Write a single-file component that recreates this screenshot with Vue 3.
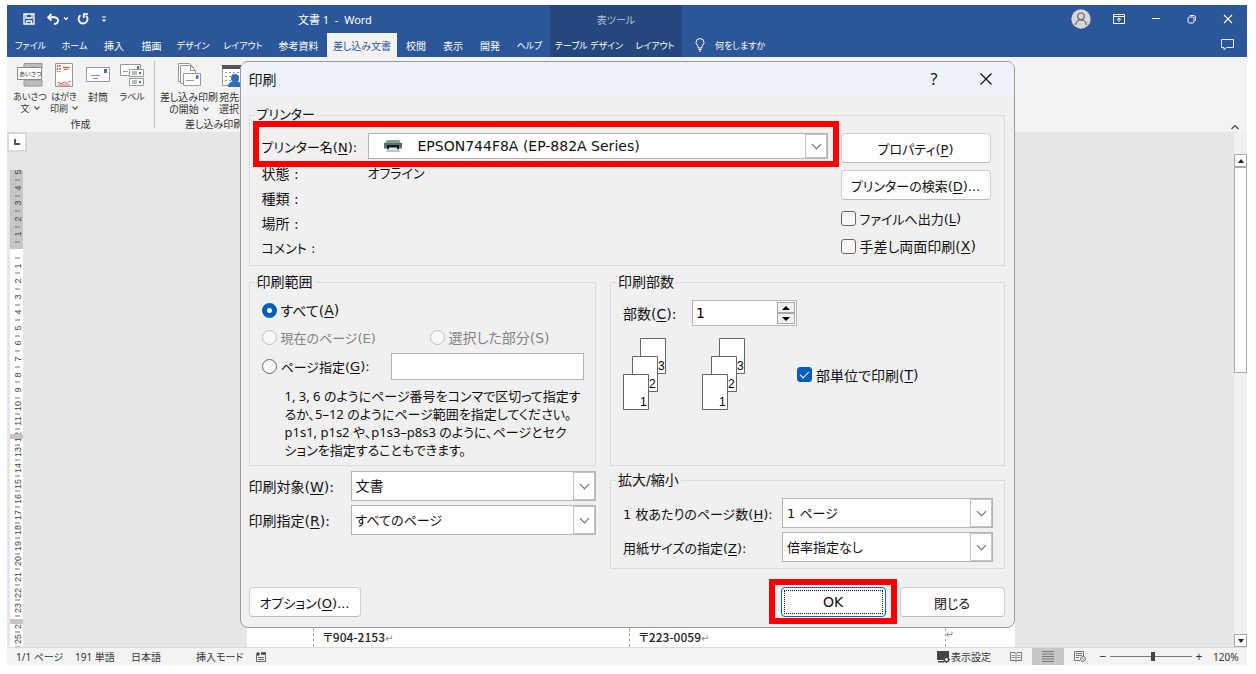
<script setup>
import { ref } from 'vue'

const tabs = ['ファイル', 'ホーム', '挿入', '描画', 'デザイン', 'レイアウト', '参考資料', '差し込み文書', '校閲', '表示', '開発', 'ヘルプ']
const activeTab = ref('差し込み文書')
const isKana = (t) => /^[ァ-ー]+$/.test(t)

const printer = ref('EPSON744F8A (EP-882A Series)')
const toFile = ref(false)
const manualDuplex = ref(false)
const range = ref('all')
const pages = ref('')
const copies = ref('1')
const collate = ref(true)
const target = ref('文書')
const which = ref('すべてのページ')
const perSheet = ref('1 ページ')
const paper = ref('倍率指定なし')
const zoom = ref(52)

const unit = 218 / 14
const origin = 80
const numbers = []
const ticks = []
for (let n = -5; n <= 25; n++) {
  if (n !== 0) numbers.push({ key: n, label: Math.abs(n), y: Math.round(origin + n * unit) })
  ticks.push({ key: n, y: Math.round(origin + (n + 0.5) * unit) })
}
</script>

<template>
  <div class="frame">
    <div class="app">
      <header class="head">
        <div class="head-left">
          <div class="titlebar">
            <div class="qat">
              <button type="button" aria-label="上書き保存">
                <svg width="12" height="12" viewBox="0 0 12 12" fill="none" stroke="#fff" stroke-width="1.3"><path d="M1 1h10v10H1zM3 1v4h6V1M3.5 11V8h5v3" /></svg>
              </button>
              <button type="button" aria-label="元に戻す">
                <svg width="22" height="12" viewBox="0 0 22 12" fill="none" stroke="#fff"><path d="M4.500 1L1.200 4.300L4.500 7.600M1.200 4.300H7C9.500 4.300 11 5.800 11 7.600S9.500 11 7 11" stroke-width="1.900" /><path d="M17 4.500l2 2 2-2" stroke-width="1.200" /></svg>
              </button>
              <button type="button" aria-label="やり直し">
                <svg width="12" height="12" viewBox="0 0 12 12" fill="none" stroke="#fff" stroke-width="1.800"><path d="M3.500 2.300A4.500 4.500 0 1 0 9 2.600M6.800 5V1.200H11" /></svg>
              </button>
              <button type="button" aria-label="カスタマイズ">
                <svg width="6" height="7" viewBox="0 0 6 7"><path d="M1 1h4" stroke="#fff" /><path d="M1 3.500h4L3 6z" fill="#fff" /></svg>
              </button>
            </div>
            <span class="doc-title">文書 1&nbsp; -&nbsp; Word</span>
          </div>
          <nav class="tabs">
            <button v-for="t in tabs" :key="t" type="button" class="tab" :class="{ active: t === activeTab, kana: isKana(t) }" @click="activeTab = t">{{ t }}</button>
          </nav>
        </div>
        <div class="head-context">
          <div class="context-title">表ツール</div>
          <nav class="context-tabs">
            <button type="button" class="tab kana">テーブル デザイン</button>
            <button type="button" class="tab kana">レイアウト</button>
          </nav>
        </div>
        <div class="head-right">
          <div class="window-tools">
            <button type="button" aria-label="アカウント">
              <svg width="20" height="20" viewBox="0 0 20 20"><circle cx="10" cy="10" r="9.700" fill="#d8d6d4" /><g fill="none" stroke="#666" stroke-width="1.200"><circle cx="10" cy="7.300" r="3.300" /><path d="M4.500 16C5 12.500 7 11 10 11s5 1.500 5.500 5" /></g></svg>
            </button>
            <button type="button" aria-label="リボンの表示オプション">
              <svg width="12" height="10" viewBox="0 0 12 10" fill="none" stroke="#fff"><path d="M.5.5h11v9H.5zM.5 2.500h11M6 8V4M4 5.800L6 4l2 1.800" /></svg>
            </button>
            <button type="button" aria-label="最小化">
              <svg width="10" height="10" viewBox="0 0 10 10" stroke="#fff"><path d="M1 4.500h8" /></svg>
            </button>
            <button type="button" aria-label="元のサイズに戻す">
              <svg width="10" height="10" viewBox="0 0 10 10" fill="none" stroke="#fff"><rect x="1" y="3" width="6" height="6" rx="1.500" /><path d="M3 1.500h3.500A2 2 0 0 1 8.500 3.500V7" /></svg>
            </button>
            <button type="button" aria-label="閉じる">
              <svg width="10" height="10" viewBox="0 0 10 10" stroke="#fff" stroke-width="1.100"><path d="M1 1l8 8M9 1L1 9" /></svg>
            </button>
          </div>
          <div class="tell-row">
            <button type="button" class="tell">
              <svg width="10" height="14" viewBox="0 0 10 14" fill="none" stroke="#fff"><path d="M3.200 10V8.800C3.200 7.500 1 6.800 1 4.500a4 4 0 0 1 8 0c0 2.300-2.200 3-2.200 4.300V10zM3.500 11.500h3M4 13h2" /></svg>
              <span class="kana">何をしますか</span>
            </button>
            <button type="button" aria-label="コメント">
              <svg width="13" height="12" viewBox="0 0 13 12" fill="none" stroke="#e4ebf5"><path d="M.5.5h12v8H5.500L3 11V8.500H.5z" /></svg>
            </button>
          </div>
        </div>
      </header>

      <section class="ribbon">
        <div class="group">
          <div class="commands">
            <button type="button" class="cmd kana">
              <svg width="26" height="24" viewBox="0 0 26 24"><path d="M7 .5h18v5H7zM7 17h18v6H7z" fill="#bdbdbd" stroke="#999" /><path d="M.5 4.500h24v12H.5z" fill="#fff" stroke="#888" /><text x="2" y="13" class="icon-text">あいさつ</text></svg>
              <span>あいさつ<br>文<i class="caret"></i></span>
            </button>
            <button type="button" class="cmd kana">
              <svg width="18" height="24" viewBox="0 0 18 24"><path d="M.5.5h17v23H.5z" fill="#fff" stroke="#999" /><g stroke="#d8604c" fill="none"><path d="M2.500 2v7M5 2v7" stroke-dasharray="2 1" stroke-width="1.500" /><path d="M8 4.500h7" stroke-width="1.500" /><path d="M9 6.500h4" /><path d="M2 19.500c1.500-1 2 1 4 1s2-2 4-1 2 1.500 3 0 2-2 3-.5M3 22h12" /></g></svg>
              <span>はがき<br>印刷<i class="caret"></i></span>
            </button>
            <button type="button" class="cmd">
              <svg width="24" height="24" viewBox="0 0 24 24"><path d="M.5 4.500h23v14H.5z" fill="#fff" stroke="#999" /><path d="M18 6h3v4h-3z" fill="#3b70b5" /><path d="M5 12.500h9M7 15.500h5" stroke="#888" /></svg>
              <span>封筒</span>
            </button>
            <button type="button" class="cmd kana">
              <svg width="24" height="24" viewBox="0 0 24 24"><path d="M.5 1.500h20v11H.5z" fill="#fff" stroke="#999" /><path d="M17 3h2v3h-2z" fill="#3b70b5" /><path d="M3 8.500h5" stroke="#999" /><path d="M9.500 6.500h14v7h-14zM9.500 15.500h14v7h-14z" fill="#fff" stroke="#999" /><path d="M12 9h5M12 11h5M12 18h5M12 20h5" stroke="#777" /><path d="M19 9h2v2h-2zM19 18h2v2h-2z" fill="#3b70b5" /></svg>
              <span>ラベル</span>
            </button>
          </div>
          <div class="group-name">作成</div>
        </div>
        <div class="group second">
          <div class="commands">
            <button type="button" class="cmd">
              <svg width="24" height="24" viewBox="0 0 24 24" fill="#fff" stroke="#999"><path d="M1.500.5h11l4 4v14h-15z" /><path d="M3.500 2.500h10l5 5v13h-15z" /><path d="M13.500 2.500v5h5" fill="none" /><path d="M6.500 10.500h17v12h-17z" /><path d="M9 17.500h8" /><path d="M19.500 12.500h1.500v3h-1.500z" fill="#3b70b5" stroke="#3b70b5" /></svg>
              <span>差し込み印刷<br>の開始<i class="caret"></i></span>
            </button>
            <button type="button" class="cmd">
              <svg width="24" height="24" viewBox="0 0 24 24"><path d="M.5 2.500h23v20H.5z" fill="#fff" stroke="#999" /><path d="M0 2h24v4H0z" fill="#555" /><path d="M3 9.500h18M3 13.500h18M3 17.500h18" stroke="#999" stroke-dasharray="2 2" /><circle cx="13" cy="15" r="4" fill="#2f6db5" /><path d="M6 24c0-4 3-6 7-6s7 2 7 6z" fill="#2f6db5" /></svg>
              <span>宛先の<br>選択<i class="caret"></i></span>
            </button>
          </div>
          <div class="group-name">差し込み印刷の開始</div>
        </div>
        <button type="button" class="collapse" aria-label="リボンを折りたたむ">
          <svg width="8" height="6" viewBox="0 0 8 6" fill="none" stroke="#444" stroke-width="1.200"><path d="M.5 5L4 1.500L7.500 5" /></svg>
        </button>
      </section>

      <main class="workspace">
        <div class="side-ruler">
          <div class="tab-stop"><svg width="6" height="6" viewBox="0 0 6 6"><path d="M1 0v5h5" fill="none" stroke="#555" stroke-width="2" /></svg></div>
          <svg class="ruler" width="13" height="477" viewBox="0 0 13 477">
            <path d="M0 0h13v477H0z" fill="#fff" />
            <path d="M0 0h13v79H0z" fill="#c6c6c6" />
            <path v-for="t in ticks" :key="'t' + t.key" :d="`M5 ${t.y}h5`" stroke="#777" />
            <text v-for="n in numbers" :key="'n' + n.key" :transform="`translate(11 ${n.y}) rotate(-90)`" class="ruler-text">{{ n.label }}</text>
            <path d="M0 264h13v5H0zM0 449h13v5H0z" fill="#c6c6c6" />
          </svg>
        </div>
        <div class="canvas">
          <div class="page">
            <div class="cell margin"></div>
            <div class="cell wide">〒904-2153<span class="mark">↵</span></div>
            <div class="cell wide">〒223-0059<span class="mark">↵</span></div>
            <div class="cell last"><span class="mark">↵</span></div>
          </div>
        </div>
        <div class="scrollbar">
          <button type="button" aria-label="上へ"><svg width="6" height="4" viewBox="0 0 6 4"><path d="M3 0l3 4H0z" fill="#222" /></svg></button>
          <div class="thumb"></div>
          <button type="button" class="down" aria-label="下へ"><svg width="6" height="4" viewBox="0 0 6 4"><path d="M0 0h6L3 4z" fill="#222" /></svg></button>
        </div>
      </main>

      <footer class="status">
        <div class="status-left">
          <span>1/1 ページ</span>
          <span>191 単語</span>
          <span>日本語</span>
          <span>挿入モード</span>
          <svg width="10" height="10" viewBox="0 0 10 10" fill="none" stroke="#666"><path d="M.5 3v6.500h9V3M2 5.500h6M2 7.500h6" /><circle cx="2" cy="2" r="1.800" fill="#444" stroke="none" /><path d="M5 1.500h5" stroke="#444" stroke-width="2.500" /></svg>
        </div>
        <div class="status-right">
          <button type="button" class="display-settings">
            <svg width="13" height="12" viewBox="0 0 13 12"><path d="M0 0h12v6H7v3H0zM1 10h6v1.500H1z" fill="#444" /><circle cx="9.500" cy="8.500" r="2.300" fill="#f3f3f3" stroke="#444" stroke-width="1.500" /><path d="M9.500 5v1.500M9.500 10.500V12M6 8.500h1.500M11.500 8.500H13" stroke="#444" /></svg>
            <span>表示設定</span>
          </button>
          <button type="button" class="view" aria-label="閲覧モード">
            <svg width="12" height="10" viewBox="0 0 12 10" fill="none" stroke="#777"><path d="M.5.5h4.500L6 1.500l1-1h4.500v8H7L6 9.500l-1-1H.5zM6 1.500v8M2 3.500h2.500M2 5.500h2.500M7.500 3.500H10M7.500 5.500H10" /></svg>
          </button>
          <button type="button" class="view on" aria-label="印刷レイアウト">
            <svg width="12" height="11" viewBox="0 0 12 11" stroke="#777"><path d="M0 .5h12M0 3h12M0 5.500h12M0 8h12M0 10.500h12" /></svg>
          </button>
          <button type="button" class="view" aria-label="Web レイアウト">
            <svg width="12" height="11" viewBox="0 0 12 11" fill="none" stroke="#777"><path d="M6 9.500H.5v-9h9V5M2 2.500h6M2 4.500h6M2 6.500h3" /><circle cx="9" cy="8" r="2.500" /><path d="M7.500 6.500l3 3" /></svg>
          </button>
          <span class="zoom-sign">−</span>
          <input v-model="zoom" class="zoom" type="range" min="0" max="100" aria-label="ズーム">
          <span class="zoom-sign">+</span>
          <span class="zoom-value">120%</span>
        </div>
      </footer>

      <div class="overlay">
        <form class="dialog" role="dialog" aria-labelledby="dlg-title" @submit.prevent>
          <div class="dialog-title">
            <span id="dlg-title">印刷</span>
            <button type="button" class="help" aria-label="ヘルプ">?</button>
            <button type="button" aria-label="閉じる">
              <svg width="12" height="12" viewBox="0 0 12 12" stroke="#111" stroke-width="1.200"><path d="M.5.5l11 11M11.500.5l-11 11" /></svg>
            </button>
          </div>

          <div class="dialog-body">
            <fieldset class="printer">
              <legend class="small">プリンター</legend>
              <div class="printer-info">
                <div class="name-row highlight">
                  <label class="small" for="printer">プリンター名(<u>N</u>):</label>
                  <div class="combo printer-combo">
                    <svg class="printer-icon" width="18" height="12" viewBox="0 0 18 12"><path d="M3 0h12l2 3H1z" fill="#7fa29a" /><path d="M0 3h18v5.500H0z" fill="#5b706c" /><path d="M3 5h12v4H3z" fill="#111a1c" /><path d="M3 9h12l1 3H2z" fill="#b9c4c8" /><path d="M5 7.500h8V10H5z" fill="#dfe6ea" /></svg>
                    <select id="printer" v-model="printer"><option>EPSON744F8A (EP-882A Series)</option></select>
                  </div>
                </div>
                <dl>
                  <dt>状態 :</dt><dd class="small">オフライン</dd>
                  <dt>種類 :</dt><dd></dd>
                  <dt>場所 :</dt><dd></dd>
                  <dt class="small">コメント :</dt><dd></dd>
                </dl>
              </div>
              <div class="printer-actions">
                <button type="button" class="btn small">プロパティ(<u>P</u>)</button>
                <button type="button" class="btn small">プリンターの検索(<u>D</u>)...</button>
                <label class="choice small"><input v-model="toFile" type="checkbox">ファイルへ出力(<u>L</u>)</label>
                <label class="choice"><input v-model="manualDuplex" type="checkbox">手差し両面印刷(<u>X</u>)</label>
              </div>
            </fieldset>

            <div class="columns">
              <fieldset class="range">
                <legend>印刷範囲</legend>
                <div class="range-row"><label class="choice"><input v-model="range" type="radio" name="range" value="all">すべて(<u>A</u>)</label></div>
                <div class="range-row pair">
                  <label class="choice off small"><input v-model="range" type="radio" name="range" value="current" disabled>現在のページ(E)</label>
                  <label class="choice off"><input v-model="range" type="radio" name="range" value="selection" disabled>選択した部分(S)</label>
                </div>
                <div class="range-row pages small">
                  <label class="choice"><input v-model="range" type="radio" name="range" value="pages">ページ指定(<u>G</u>):</label>
                  <input v-model="pages" class="text" type="text" aria-label="ページ指定">
                </div>
                <p class="hint">1, 3, 6 のようにページ番号をコンマで区切って指定す<br>るか、5–12 のようにページ範囲を指定してください。<br>p1s1, p1s2 や、p1s3–p8s3 のように、ページとセク<br>ションを指定することもできます。</p>
              </fieldset>

              <fieldset class="copies">
                <legend>印刷部数</legend>
                <div class="copies-row">
                  <label for="copies">部数(<u>C</u>):</label>
                  <div class="spin">
                    <input id="copies" v-model="copies" type="text">
                    <div class="spin-buttons">
                      <button type="button" aria-label="増やす"><svg width="8" height="4" viewBox="0 0 8 4"><path d="M4 0l4 4H0z" /></svg></button>
                      <button type="button" aria-label="減らす"><svg width="8" height="4" viewBox="0 0 8 4"><path d="M0 0h8L4 4z" /></svg></button>
                    </div>
                  </div>
                </div>
                <div class="collate-row">
                  <svg width="123" height="73" viewBox="0 0 123 73">
                    <g v-for="x in [0, 79]" :key="x" :transform="`translate(${x} 0)`" class="sheets">
                      <path d="M17.500.5h25v35h-25z" /><text x="35" y="32">3</text>
                      <path d="M9.500 18.500h25v35h-25z" /><text x="26" y="50">2</text>
                      <path d="M.5 36.500h25v35H.5z" /><text x="17" y="68">1</text>
                    </g>
                  </svg>
                  <label class="choice"><input v-model="collate" type="checkbox">部単位で印刷(<u>T</u>)</label>
                </div>
              </fieldset>

              <div class="targets">
                <label for="target">印刷対象(<u>W</u>):</label>
                <div class="combo"><select id="target" v-model="target"><option>文書</option></select></div>
                <label for="which">印刷指定(<u>R</u>):</label>
                <div class="combo small"><select id="which" v-model="which"><option>すべてのページ</option></select></div>
              </div>

              <fieldset class="scaling">
                <legend>拡大/縮小</legend>
                <label class="small" for="per-sheet">1 枚あたりのページ数(<u>H</u>):</label>
                <div class="combo small"><select id="per-sheet" v-model="perSheet"><option>1 ページ</option></select></div>
                <label class="small" for="paper">用紙サイズの指定(<u>Z</u>):</label>
                <div class="combo small"><select id="paper" v-model="paper"><option>倍率指定なし</option></select></div>
              </fieldset>
            </div>

            <div class="dialog-buttons">
              <button type="button" class="btn options small">オプション(<u>O</u>)...</button>
              <div class="highlight ok-wrap"><button type="submit" class="btn ok"><span>OK</span></button></div>
              <button type="button" class="btn close small">閉じる</button>
            </div>
          </div>
        </form>
      </div>
    </div>
  </div>
</template>

<style>
body {
  background: #fff;
}
</style>

<style scoped>
* {
  box-sizing: border-box;
}
.frame {
  height: 100vh;
  padding: 5px 9px 9px 7px;
  font-family: "Noto Sans", "Noto Sans CJK JP", sans-serif;
  font-feature-settings: "palt";
  font-size: 10px;
  color: #333;
}
button {
  font: inherit;
  color: inherit;
  font-feature-settings: inherit;
  background: none;
  border: 0;
  padding: 0;
}
svg {
  display: block;
  flex: none;
}
u {
  text-underline-offset: 2px;
}
.kana {
  font-size: 9px;
}
.app {
  position: relative;
  height: 100%;
  display: flex;
  flex-direction: column;
  overflow: hidden;
  background: #e6e6e6;
}

/* header */
.head {
  display: grid;
  grid-template-columns: 543px 132px 1fr;
  background: #2b579a;
  color: #fff;
  white-space: nowrap;
}
.titlebar,
.context-title,
.window-tools {
  height: 28px;
}
.titlebar {
  display: flex;
  align-items: center;
}
.qat {
  display: flex;
  align-items: center;
  gap: 12px;
  width: 291px;
  padding-left: 16px;
}
.qat button:nth-child(3) {
  margin-left: -4px;
}
.doc-title {
  font-size: 11px;
}
.tabs {
  display: grid;
  grid-template-columns: 47px 41px 38px 37px 46px 54px 57px 70px 38px 36px 38px 41px;
}
.tab {
  height: 24px;
  text-align: center;
}
.tab.active {
  background: #f3f3f3;
  color: #2b579a;
}
.head-context {
  background: #24477d;
}
.context-title {
  display: grid;
  place-items: center;
  color: #b4c3da;
}
.context-tabs {
  display: grid;
  grid-template-columns: 78px 54px;
}
.window-tools {
  display: flex;
  align-items: center;
  justify-content: flex-end;
  gap: 26px;
  padding-right: 14px;
}
.window-tools button:first-child {
  margin-right: -4px;
}
.tell-row {
  display: flex;
  align-items: center;
  justify-content: space-between;
  height: 24px;
  padding: 0 13px;
}
.tell {
  display: flex;
  align-items: center;
  gap: 10px;
}

/* ribbon */
.ribbon {
  display: flex;
  height: 75px;
  background: #f3f3f3;
  white-space: nowrap;
}
.group {
  display: flex;
  flex-direction: column;
  align-items: center;
  width: 148px;
  margin: 4px 0;
  padding: 0 6px;
  border-right: 1px solid #c0c0c0;
}
.group.second {
  border-right: 0;
}
.commands {
  display: flex;
  align-items: flex-start;
  align-self: stretch;
  height: 56px;
}
.cmd {
  display: flex;
  flex-direction: column;
  align-items: center;
  gap: 4px;
  flex: none;
  width: 34px;
  padding-top: 2px;
  line-height: 12px;
}
.second .cmd:first-child {
  width: 56px;
}
.caret {
  display: inline-block;
  width: 4px;
  height: 4px;
  margin: 0 1px 3px 5px;
  border: solid #444;
  border-width: 0 1px 1px 0;
  transform: rotate(45deg);
}
.group-name {
  line-height: 18px;
}
.icon-text {
  font-size: 6px;
  fill: #333;
}
.collapse {
  align-self: flex-end;
  margin-left: auto;
  padding: 2px 8px;
}

/* workspace */
.workspace {
  flex: 1;
  display: flex;
  min-height: 0;
}
.side-ruler {
  width: 20px;
  display: flex;
  flex-direction: column;
}
.tab-stop {
  display: grid;
  place-items: center;
  width: 20px;
  height: 20px;
  margin-bottom: 18px;
  background: #fff;
  border: 2px solid #d8d8d8;
}
.ruler {
  margin-left: 3px;
  overflow: visible;
}
.ruler-text {
  font-family: "Liberation Sans", sans-serif;
  font-size: 9px;
  fill: #444;
  text-anchor: middle;
}
.canvas {
  flex: 1;
  display: flex;
  justify-content: center;
  overflow: hidden;
}
.page {
  display: flex;
  align-items: flex-end;
  width: 768px;
  background: #fff;
}
.cell {
  height: 19px;
  padding-left: 9px;
  border-right: 1px dashed #aaa;
  font-family: "Noto Sans CJK JP", sans-serif;
  font-size: 12px;
  font-weight: 500;
  line-height: 18px;
  color: #222;
}
.cell.margin {
  width: 67px;
}
.cell.wide {
  width: 316px;
}
.cell.last {
  flex: 1;
  padding-left: 0;
  border: 0;
  line-height: 10px;
}
.mark {
  font-family: "DejaVu Sans", sans-serif;
  font-size: 10px;
  font-weight: 400;
  color: #888;
}
.scrollbar {
  display: flex;
  flex-direction: column;
  width: 13px;
  padding-top: 22px;
  background: #f1f1f1;
}
.scrollbar button {
  display: grid;
  place-items: center;
  height: 13px;
  background: #fff;
  border: 1px solid #aaa;
}
.scrollbar .down {
  margin-top: auto;
}
.thumb {
  height: 206px;
  background: #fff;
  border: 1px solid #aaa;
}

/* status bar */
.status {
  display: flex;
  justify-content: space-between;
  height: 18px;
  background: #f3f3f3;
  border-top: 1px solid #dcdcdc;
  white-space: nowrap;
}
.status-left {
  display: grid;
  grid-template-columns: 59px 56px 65px 60px auto;
  align-items: center;
  padding-left: 9px;
}
.status-right {
  display: flex;
  align-items: center;
}
.display-settings {
  display: flex;
  align-items: center;
  gap: 1px;
  margin-right: 9px;
}
.view {
  display: grid;
  place-items: center;
  width: 32px;
  height: 17px;
}
.view.on {
  background: #c6c6c6;
}
.zoom-sign {
  width: 14px;
  font-size: 12px;
  text-align: center;
}
.zoom {
  width: 82px;
  height: 14px;
  margin: 0;
  appearance: none;
  background: linear-gradient(#777, #777) center / 100% 1px no-repeat;
}
.zoom::-webkit-slider-thumb {
  appearance: none;
  width: 4px;
  height: 9px;
  background: #444;
}
.zoom-value {
  width: 41px;
  padding-left: 7px;
}

/* dialog */
.overlay {
  position: absolute;
  inset: 56px 0 0;
  display: flex;
  align-items: flex-start;
  justify-content: center;
}
.dialog {
  width: 775px;
  max-width: 100%;
  overflow: hidden;
  background: #f0f0f0;
  border: 1px solid #9a9a9a;
  border-radius: 8px;
  font-family: "DejaVu Sans", "Noto Sans CJK JP", sans-serif;
  font-size: 14px;
  color: #111;
  white-space: nowrap;
}
.small {
  font-size: 13px;
}
.dialog-title {
  display: flex;
  align-items: center;
  height: 35px;
  padding: 0 22px 2px 8px;
  background: #eef3fa;
}
.dialog-title span {
  margin-right: auto;
}
.dialog-title .help {
  font-family: "Noto Sans", sans-serif;
  font-size: 16px;
}
.dialog-title button + button {
  margin-left: 42px;
}
.dialog-body {
  padding: 9px 9px 10px 8px;
}
fieldset {
  min-width: 0;
  margin: 0;
  border: 1px solid #dcdcdc;
}
legend {
  height: 18px;
  padding: 0 2px;
  margin-left: -7px;
  line-height: 18px;
}
.printer {
  display: grid;
  grid-template-columns: 1fr 150px;
  gap: 13px;
  padding: 9px 13px 4px 12px;
}
.name-row {
  display: grid;
  grid-template-columns: 106px 1fr;
  align-items: center;
}
.highlight {
  position: relative;
}
.highlight::after {
  content: "";
  position: absolute;
  inset: -12px -11px -8px -9px;
  border: 6px solid #f90000;
  pointer-events: none;
}
.combo {
  position: relative;
  display: grid;
}
select {
  appearance: none;
  width: 100%;
  height: 30px;
  padding: 0 24px 0 4px;
  font: inherit;
  font-feature-settings: inherit;
  color: #111;
  background: #fff;
  border: 1px solid #b4b4b4;
  border-radius: 0;
}
.combo::before {
  content: "";
  position: absolute;
  inset: 1px 1px 1px auto;
  width: 20px;
  border: 1px solid #c4c4c4;
}
.combo::after {
  content: "";
  position: absolute;
  top: calc(50% - 5px);
  right: 8px;
  width: 6px;
  height: 6px;
  border: solid #666;
  border-width: 0 1px 1px 0;
  transform: rotate(45deg);
}
.printer-combo select {
  height: 26px;
  padding-left: 49px;
}
.printer-icon {
  position: absolute;
  top: 7px;
  left: 16px;
}
dl {
  display: grid;
  grid-template-columns: 106px 1fr;
  grid-auto-rows: 25px;
  align-items: center;
  margin: 1px 0;
}
dd {
  margin: 0;
}
.printer-actions {
  display: flex;
  flex-direction: column;
}
.btn {
  height: 30px;
  background: #fdfdfd;
  border: 1px solid #d0d0d0;
  border-bottom-color: #bcbcbc;
  border-radius: 4px;
}
.printer-actions .btn {
  margin-bottom: 7px;
}
.printer-actions .btn + .btn {
  margin-bottom: 4px;
}
.choice {
  display: flex;
  align-items: center;
}
.printer-actions .choice {
  height: 28px;
}
.choice.off {
  color: #838383;
}
.choice input {
  appearance: none;
  flex: none;
  display: grid;
  place-items: center;
  width: 15px;
  height: 15px;
  margin: 0 4px 0 0;
  background: #f8f8f8;
  border: 1px solid #666;
  border-radius: 3px;
}
.choice input[type="radio"] {
  border-radius: 50%;
}
.choice input:disabled {
  border-color: #c0c0c0;
}
.choice input[type="radio"]:checked {
  background: #fff;
  border: 5px solid #005fb8;
}
.choice input[type="checkbox"]:checked {
  background: #005fb8;
  border-color: #005fb8;
}
.choice input[type="checkbox"]:checked::after {
  content: "";
  width: 8px;
  height: 4px;
  margin-bottom: 2px;
  border: solid #fff;
  border-width: 0 0 1px 1px;
  transform: rotate(-45deg);
}
.columns {
  display: grid;
  grid-template-columns: 348fr 395fr;
  gap: 5px 14px;
  margin-top: 7px;
}
.range {
  padding: 8px 11px 6px 12px;
}
.range-row {
  display: flex;
  align-items: center;
  height: 22px;
  margin-bottom: 5px;
}
.pair {
  display: grid;
  grid-template-columns: 168px 1fr;
}
.pages {
  display: grid;
  grid-template-columns: 129px 1fr;
  height: 27px;
}
.text {
  width: 100%;
  height: 27px;
  background: #fff;
  border: 1px solid #b4b4b4;
}
.hint {
  margin: 7px 0 0 23px;
  font-family: "Noto Sans", "Noto Sans CJK JP", sans-serif;
  font-size: 13px;
  line-height: 18px;
}
.copies {
  padding: 9px 12px 4px;
}
.copies-row {
  display: grid;
  grid-template-columns: 69px 105px;
  align-items: center;
}
.spin {
  display: flex;
  height: 26px;
  padding: 1px;
  background: #fff;
  border: 1px solid #b4b4b4;
}
.spin input {
  flex: 1;
  min-width: 0;
  padding: 0 2px;
  font: inherit;
  border: 0;
  background: none;
}
.spin-buttons {
  display: grid;
  grid-template-rows: 1fr 1fr;
  width: 18px;
}
.spin-buttons button {
  display: grid;
  place-items: center;
  background: #f0f0f0;
  border: 1px solid #a8a8a8;
}
.collate-row {
  display: flex;
  align-items: center;
  gap: 51px;
  margin-top: 12px;
}
.sheets path {
  fill: #fff;
  stroke: #666;
}
.sheets text {
  font-family: "Liberation Sans", sans-serif;
  font-size: 12px;
}
.targets {
  display: grid;
  grid-template-columns: 102px 1fr;
  grid-auto-rows: 30px;
  gap: 4px 0;
  align-items: center;
  align-content: start;
}
.scaling {
  display: grid;
  grid-template-columns: 159px 1fr;
  gap: 4px 0;
  align-items: center;
  padding: 9px 11px 6px 12px;
}
.dialog-buttons {
  display: flex;
  gap: 14px;
  margin-top: 18px;
}
.options {
  width: 112px;
  margin-right: auto;
}
.close,
.ok {
  width: 105px;
}
.ok-wrap::after {
  inset: -8px -11px -7px -12px;
}
.ok {
  display: grid;
  padding: 2px;
  border: 1px solid #0067c0;
}
.ok span {
  display: grid;
  place-items: center;
  border: 1px dotted #111;
}
</style>
